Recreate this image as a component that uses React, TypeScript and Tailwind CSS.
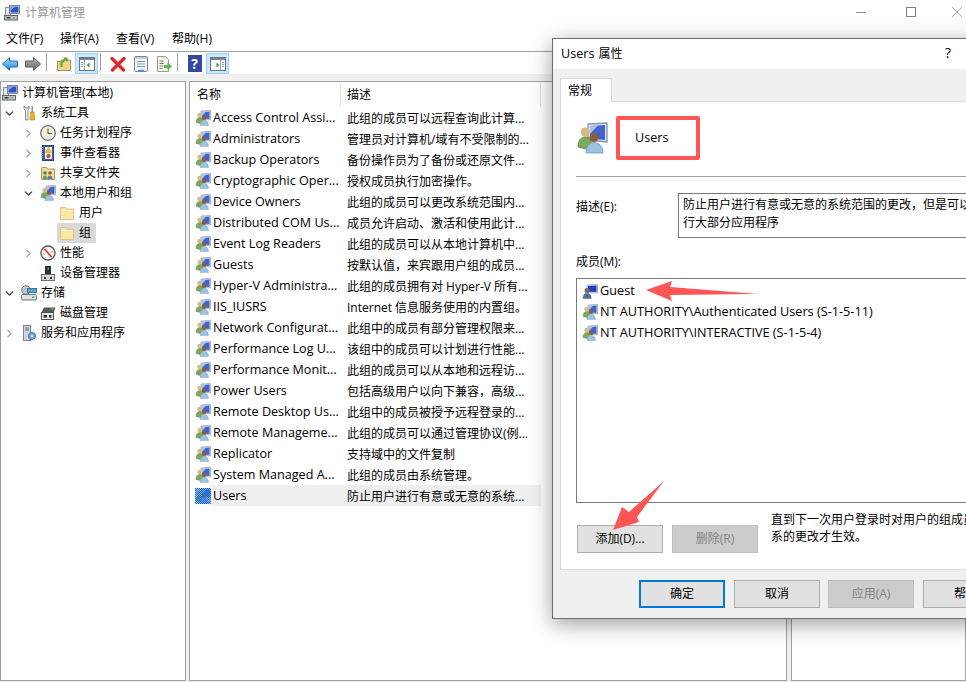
import type { ReactNode } from "react";
import { ChevronDown, ChevronRight } from "lucide-react";

const groups = [
  ["Access Control Assi...", "此组的成员可以远程查询此计算..."],
  ["Administrators", "管理员对计算机/域有不受限制的..."],
  ["Backup Operators", "备份操作员为了备份或还原文件..."],
  ["Cryptographic Oper...", "授权成员执行加密操作。"],
  ["Device Owners", "此组的成员可以更改系统范围内..."],
  ["Distributed COM Us...", "成员允许启动、激活和使用此计..."],
  ["Event Log Readers", "此组的成员可以从本地计算机中..."],
  ["Guests", "按默认值，来宾跟用户组的成员..."],
  ["Hyper-V Administra...", "此组的成员拥有对 Hyper-V 所有..."],
  ["IIS_IUSRS", "Internet 信息服务使用的内置组。"],
  ["Network Configurat...", "此组中的成员有部分管理权限来..."],
  ["Performance Log U...", "该组中的成员可以计划进行性能..."],
  ["Performance Monit...", "此组的成员可以从本地和远程访..."],
  ["Power Users", "包括高级用户以向下兼容，高级..."],
  ["Remote Desktop Us...", "此组中的成员被授予远程登录的..."],
  ["Remote Manageme...", "此组的成员可以通过管理协议(例..."],
  ["Replicator", "支持域中的文件复制"],
  ["System Managed A...", "此组的成员由系统管理。"],
  ["Users", "防止用户进行有意或无意的系统..."],
];

const depthPad = ["pl-0", "pl-[19px]", "pl-[38px]"];

function Computer({ className = "w-4 h-4" }: { className?: string }) {
  return (
    <svg viewBox="0 0 16 16" className={className}>
      <rect x="1.5" y="2.5" width="5" height="8" fill="#e3e5e8" stroke="#8b9097" />
      <rect x="5.5" y="0.5" width="10" height="8" fill="#dfe5ee" stroke="#7d8794" />
      <rect x="6.5" y="1.5" width="8" height="6" fill="#2b50c4" />
      <path d="M6.5 1.5h5l-5 4z" fill="#86a6ea" />
      <rect x="0.5" y="10.5" width="13" height="4.5" fill="#bfc3c8" stroke="#5f656b" />
      <rect x="2.5" y="12" width="4" height="1.5" fill="#3c4044" />
      <rect x="9" y="12" width="2" height="1.5" fill="#6fbf4a" />
    </svg>
  );
}

function GroupIcon({ className = "w-4 h-4", dither }: { className?: string; dither?: boolean }) {
  return (
    <svg viewBox="0 0 16 16" className={className}>
      <defs>
        <pattern id="dither" width="2" height="2" patternUnits="userSpaceOnUse">
          <rect width="1" height="1" fill="#1a66cc" />
          <rect x="1" y="1" width="1" height="1" fill="#1a66cc" />
        </pattern>
      </defs>
      <path d="M6 1l9.500-.5V10L6 9z" fill="#dfe5ee" stroke="#8d99a8" strokeWidth="0.7" />
      <path d="M7 2l7.500-.5V9L7 8.300z" fill="#3f63cf" />
      <path d="M7 2l4-.3L7 6z" fill="#a8c0f0" />
      <circle cx="4.6" cy="5" r="2.300" fill="#d3bd80" />
      <path d="M1 12.500c0-3.200 1.500-5 3.600-5s3.400 1.800 3.400 5l-3 1z" fill="#7ea85c" stroke="#5d8043" strokeWidth="0.4" />
      <circle cx="9" cy="7.800" r="2.300" fill="#8a5f3d" />
      <path d="M5 15.500c0-3.300 1.700-5.200 4-5.200s4.500 1.900 4.500 5.200z" fill="#9cc0de" stroke="#6f97ba" strokeWidth="0.4" />
      {dither && <rect width="16" height="16" fill="#3d8be0" opacity="0.45" />}
      {dither && <rect width="16" height="16" fill="url(#dither)" />}
    </svg>
  );
}

function GuestIcon() {
  return (
    <svg viewBox="0 0 16 16" className="w-4 h-4">
      <path d="M5 2l10.500-.5V10L5 9.500z" fill="#dfe5ee" stroke="#8d99a8" strokeWidth="0.7" />
      <path d="M6 3l8.500-.5V9L6 8.700z" fill="#1f3fc0" />
      <circle cx="5" cy="7.500" r="2.500" fill="#7a6a55" />
      <path d="M1 15.500c0-3.300 1.600-5.200 4-5.200s4.200 1.900 4.200 5.200z" fill="#4f7590" stroke="#33506a" strokeWidth="0.4" />
    </svg>
  );
}

function Folder() {
  return (
    <svg viewBox="0 0 16 16" className="w-4 h-4">
      <path d="M1.500 2.500h5l1 1.500h7v10.500h-13z" fill="#fbe6a6" stroke="#dcc687" />
      <path d="M2 5.500h12" stroke="#fff6d9" />
    </svg>
  );
}

function ToolBtn({ active, first, children }: { active?: boolean; first?: boolean; children: ReactNode }) {
  return (
    <div className={`w-[23px] h-[21px] flex items-center justify-center border ${active ? "bg-[#cce8ff] border-[#99d1ff]" : "border-transparent"} ${first ? "-ml-[2px]" : ""}`}>
      {children}
    </div>
  );
}

function PaneIcon({ left }: { left?: boolean }) {
  return (
    <svg viewBox="0 0 16 16" className="w-4 h-4">
      <rect x="0.5" y="1.5" width="15" height="13" fill="#fdfdfd" stroke="#6d7680" />
      <rect x="1" y="2" width="14" height="2" fill="#78838f" />
      <path d={left ? "M5.500 4v10" : "M10.500 4v10"} stroke="#9aa4ae" />
      <path d={left ? "M10.500 6.500v5L7.500 9z" : "M6.500 6.500v5l3-2.500z"} fill="#2f9e44" />
      <path d={left ? "M2 6.500h2M2 8.500h2M2 10.500h2" : "M12 6.500h2M12 8.500h2M12 10.500h2"} stroke="#9aa4ae" />
    </svg>
  );
}

function Divider() {
  return <div className="w-px h-[18px] bg-[#a0a0a0] ml-[2px] mr-[5px]" />;
}

function Toolbar() {
  return (
    <div className="h-[22px] bg-white flex items-start pt-px shrink-0">
      <ToolBtn first>
        <svg viewBox="0 0 16 14" className="w-4 h-[14px]">
          <defs>
            <linearGradient id="backArrow" x1="0" y1="0" x2="0" y2="1">
              <stop offset="0" stopColor="#a6dcfb" />
              <stop offset="1" stopColor="#1f86d8" />
            </linearGradient>
          </defs>
          <path d="M.5 7L7.500.7v3.300h8v6h-8v3.300z" fill="url(#backArrow)" stroke="#2272b5" />
        </svg>
      </ToolBtn>
      <ToolBtn>
        <svg viewBox="0 0 16 14" className="w-4 h-[14px]">
          <defs>
            <linearGradient id="nextArrow" x1="0" y1="0" x2="0" y2="1">
              <stop offset="0" stopColor="#b5b5b5" />
              <stop offset="1" stopColor="#6a6a6a" />
            </linearGradient>
          </defs>
          <path d="M15.500 7L8.500.7v3.300h-8v6h8v3.300z" fill="url(#nextArrow)" stroke="#5c5c5c" />
        </svg>
      </ToolBtn>
      <Divider />
      <ToolBtn>
        <svg viewBox="0 0 16 16" className="w-4 h-4">
          <path d="M1.500 5.500h3l1-1.500h9v10.500h-13z" fill="#f0d48c" stroke="#b0925a" />
          <path d="M5.500 11V6.500l4-3.500" fill="none" stroke="#58ad2e" strokeWidth="2.200" />
          <path d="M7 1.500h4.500V6z" fill="#58ad2e" />
        </svg>
      </ToolBtn>
      <ToolBtn active><PaneIcon left /></ToolBtn>
      <Divider />
      <ToolBtn>
        <svg viewBox="0 0 16 16" className="w-4 h-4">
          <path d="M2 2.500l11.500 11.500M14 2.500L2.500 14" stroke="#de2a2a" strokeWidth="3.400" strokeLinecap="round" />
        </svg>
      </ToolBtn>
      <ToolBtn>
        <svg viewBox="0 0 16 16" className="w-4 h-4">
          <rect x="1.5" y="0.5" width="13" height="15" rx="1" fill="#f4f6f8" stroke="#7b8590" />
          <rect x="2" y="1" width="12" height="2" fill="#c3ccd5" />
          <path d="M4 5.500h8M4 8h8M4 10.500h8" stroke="#8a97a5" />
          <path d="M5 14.500h6" stroke="#3d9be3" strokeWidth="1.500" />
        </svg>
      </ToolBtn>
      <ToolBtn>
        <svg viewBox="0 0 16 16" className="w-4 h-4">
          <path d="M1.500.5h8l3 3v12h-11z" fill="#fbf8ec" stroke="#9c9a8d" />
          <path d="M3.500 5h4M3.500 7.500h4M3.500 10h4M3.500 12.500h3" stroke="#777" />
          <path d="M8 9h3.500V6.500L16 10.500l-4.500 4V12H8z" fill="#55b84a" />
        </svg>
      </ToolBtn>
      <Divider />
      <ToolBtn>
        <div className="w-[14px] h-[17px] bg-[#33489f] text-white text-[14px] leading-[17px] text-center font-bold">?</div>
      </ToolBtn>
      <ToolBtn active><PaneIcon /></ToolBtn>
    </div>
  );
}

function TreeRow({ depth, open, closed, selected, icon, label }: { depth: number; open?: boolean; closed?: boolean; selected?: boolean; icon: ReactNode; label: string }) {
  return (
    <div className={`h-5 flex items-center ${depthPad[depth]}`}>
      <div className="w-4 flex justify-center shrink-0">
        {open && <ChevronDown className="w-[13px] h-[13px] text-[#404040]" strokeWidth={2.5} />}
        {closed && <ChevronRight className="w-[13px] h-[13px] text-[#a6a6a6]" strokeWidth={2.5} />}
      </div>
      <div className={`flex items-center h-5 ml-[2px] pl-[2px] pr-[5px] ${selected ? "bg-[#d9d9d9]" : ""}`}>
        <div className="w-4 h-4 mr-[4px] shrink-0">{icon}</div>
        <span className="whitespace-nowrap">{label}</span>
      </div>
    </div>
  );
}

function Tree() {
  return (
    <div className="w-[186px] border border-[#a0a0a0] bg-white shrink-0 pt-px">
      <div className="h-5 flex items-center pl-px">
        <Computer className="w-4 h-4 mr-[4px]" />
        <span>计算机管理(本地)</span>
      </div>
      <TreeRow depth={0} open label="系统工具" icon={
        <svg viewBox="0 0 16 16" className="w-4 h-4">
          <path d="M3 1v3l1.500 1.500V15H7V5.500L8 4V1L6.500 3h-2z" fill="#e8ecef" stroke="#6f7880" strokeWidth="0.8" />
          <rect x="10.5" y="1" width="1.5" height="6" fill="#8f98a0" />
          <path d="M9.500 7h3.500l.5 8h-4.500z" fill="#f0b41c" stroke="#a8780f" strokeWidth="0.6" />
        </svg>
      } />
      <TreeRow depth={1} closed label="任务计划程序" icon={
        <svg viewBox="0 0 16 16" className="w-4 h-4">
          <circle cx="8" cy="8" r="7.300" fill="#f4eed9" stroke="#6d747b" strokeWidth="1.300" />
          <path d="M8 3.500V8.500h4" stroke="#4a4f54" fill="none" />
        </svg>
      } />
      <TreeRow depth={1} closed label="事件查看器" icon={
        <svg viewBox="0 0 16 16" className="w-4 h-4">
          <rect x="2.5" y="0.5" width="11" height="15" fill="#3f5f9e" stroke="#2d4777" />
          <path d="M1.500 2v12" stroke="#c8ced6" strokeWidth="2" strokeDasharray="1 1" />
          <rect x="5" y="2" width="7" height="12" fill="#eef1f5" />
          <path d="M8.500 2.500l3 5h-6z" fill="#f5c518" stroke="#a8860e" strokeWidth="0.5" />
          <circle cx="8.500" cy="11" r="2.200" fill="#c9534f" />
        </svg>
      } />
      <TreeRow depth={1} closed label="共享文件夹" icon={
        <svg viewBox="0 0 16 16" className="w-4 h-4">
          <path d="M1.500 2.500h5l1 1.500h7v10.500h-13z" fill="#f3dc9c" stroke="#b89a55" />
          <circle cx="5" cy="8" r="1.800" fill="#3f8f55" />
          <path d="M2.500 14c0-2 1-3.500 2.500-3.500s2.500 1.500 2.500 3.500z" fill="#5aa469" />
          <circle cx="10" cy="8" r="1.800" fill="#8a5f3d" />
          <path d="M7.500 14c0-2 1-3.500 2.500-3.500s2.500 1.500 2.500 3.500z" fill="#4f7fb5" />
        </svg>
      } />
      <TreeRow depth={1} open label="本地用户和组" icon={<GroupIcon />} />
      <TreeRow depth={2} label="用户" icon={<Folder />} />
      <TreeRow depth={2} selected label="组" icon={<Folder />} />
      <TreeRow depth={1} closed label="性能" icon={
        <svg viewBox="0 0 16 16" className="w-4 h-4">
          <circle cx="8" cy="8" r="7" fill="#fbf8f0" stroke="#5c5c5c" strokeWidth="1.400" />
          <path d="M4.500 4l7 8" stroke="#d8312a" strokeWidth="1.600" />
          <circle cx="4" cy="9" r="0.7" fill="#777" />
          <circle cx="12" cy="7" r="0.7" fill="#777" />
        </svg>
      } />
      <TreeRow depth={1} label="设备管理器" icon={
        <svg viewBox="0 0 16 16" className="w-4 h-4">
          <rect x="5" y="1" width="6" height="9" fill="#2d2f31" />
          <rect x="7.5" y="3" width="1.500" height="1.500" fill="#4cd964" />
          <rect x="1.5" y="9.500" width="13" height="6" fill="#d4d7da" stroke="#6d7278" />
          <rect x="4" y="12" width="2" height="2" fill="#333" />
          <rect x="10" y="12" width="2" height="2" fill="#333" />
        </svg>
      } />
      <TreeRow depth={0} open label="存储" icon={
        <svg viewBox="0 0 16 16" className="w-4 h-4">
          <circle cx="5" cy="5" r="4.300" fill="#c4ccd3" stroke="#6f7880" />
          <circle cx="5" cy="5" r="1.200" fill="#f2f4f6" stroke="#6f7880" strokeWidth="0.5" />
          <rect x="6.5" y="3.500" width="9" height="4" fill="#5aa0d8" stroke="#3d7199" />
          <rect x="0.5" y="9.500" width="15" height="5.500" rx="1" fill="#dfe3e6" stroke="#6d7278" />
          <rect x="11" y="11.500" width="2.500" height="1.500" fill="#3fae49" />
        </svg>
      } />
      <TreeRow depth={1} label="磁盘管理" icon={
        <svg viewBox="0 0 16 16" className="w-4 h-4">
          <path d="M4 2.500h11.500l-2 5H1.500z" fill="#55585b" />
          <rect x="10.5" y="3.500" width="3" height="1" fill="#5fd06a" />
          <rect x="1.5" y="7.500" width="12" height="7" fill="#e2e4e6" stroke="#4f5255" />
          <rect x="3.5" y="10" width="3.500" height="2.500" fill="#2d2f31" />
          <rect x="9" y="10" width="2.500" height="2.500" fill="#2d2f31" />
        </svg>
      } />
      <TreeRow depth={0} closed label="服务和应用程序" icon={
        <svg viewBox="0 0 16 16" className="w-4 h-4">
          <rect x="2.5" y="0.5" width="7" height="15" fill="#d1d7dd" stroke="#7b8590" />
          <path d="M4 3h4M4 5h4" stroke="#4a6aa8" />
          <circle cx="11" cy="11" r="3.500" fill="#6ba6de" stroke="#3d7199" strokeDasharray="1.500 0.700" strokeWidth="1.300" />
          <circle cx="11" cy="11" r="1.200" fill="#eaf2fa" />
        </svg>
      } />
    </div>
  );
}

function GroupList() {
  return (
    <div className="w-[598px] ml-[3px] border border-[#a0a0a0] bg-white shrink-0 pt-px">
      <div className="flex h-[24px] w-[351px] border-r border-[#e5e5e5]">
        <div className="w-[151px] pl-[7px] border-r border-[#e5e5e5] flex items-center">名称</div>
        <div className="pl-[6px] flex items-center">描述</div>
      </div>
      {groups.map(([name, desc]) => {
        const selected = name === "Users";
        return (
          <div key={name} className="h-[21px] flex items-center pl-[5px] w-[351px]">
            <GroupIcon className="w-4 h-4 shrink-0" dither={selected} />
            <div className={`flex items-center h-[21px] flex-1 pt-[2px] ${selected ? "bg-[#efefef]" : ""}`}>
              <span className="w-[136px] whitespace-nowrap pl-[2px] text-[12.6px]">{name}</span>
              <span className="whitespace-nowrap">{desc}</span>
            </div>
          </div>
        );
      })}
    </div>
  );
}

function DlgButton({ children, disabled, primary, className = "" }: { children: ReactNode; disabled?: boolean; primary?: boolean; className?: string }) {
  return (
    <div className={`w-[86px] h-[28px] shrink-0 flex items-center justify-center ${primary ? "border-2 border-[#0078d7] bg-[#e1e1e1]" : disabled ? "border border-[#bfbfbf] bg-[#cccccc] text-[#838383]" : "border border-[#adadad] bg-[#e1e1e1]"} ${className}`}>
      {children}
    </div>
  );
}

function Dialog() {
  return (
    <div className="absolute left-[552px] top-[38px] w-[500px] h-[581px] bg-[#f0f0f0] border border-[#6e6e6e] shadow-[0_5px_20px_rgba(0,0,0,0.38)] flex flex-col">
      <div className="h-[30px] bg-white flex items-center pl-[8px] relative shrink-0 gap-1">
        <span className="text-[12.6px]">Users</span>
        <span>属性</span>
        <span className="absolute left-[392px] top-[7px] text-[14px] font-medium">?</span>
      </div>
      <div className="pl-[7px] pt-[9px] flex-1 flex flex-col">
        <div className="w-[52px] h-[24px] bg-white border border-[#d9d9d9] border-b-0 flex items-center pl-[7px] relative z-10 -mb-px">
          常规
        </div>
        <div className="w-[480px] h-[469px] bg-white border border-[#d9d9d9] pl-[15px] pt-[14px]">
          <div className="flex items-center h-[44px]">
            <GroupIcon className="w-8 h-8" />
            <div className="ml-[8px] w-[84px] h-[44px] border-[4px] border-[#fe5555] rounded-[2px] flex items-center pl-[15px] text-[12.6px]">Users</div>
          </div>
          <div className="w-[440px] h-px bg-[#a0a0a0] mt-[16px]" />
          <div className="flex mt-[16px]">
            <div className="w-[102px] shrink-0 pt-[8px]">描述(E):</div>
            <div className="w-[400px] shrink-0 h-[45px] border border-[#7a7a7a] pl-[4px] pt-[2px] leading-[18px] whitespace-nowrap">
              防止用户进行有意或无意的系统范围的更改，但是可以运<br />行大部分应用程序
            </div>
          </div>
          <div className="mt-[16px] h-[16px] leading-[16px]">成员(M):</div>
          <div className="w-[500px] h-[225px] border border-[#7a7a7a] mt-[8px] pt-px pl-[5px] text-[12.7px]">
            <div className="h-[21px] flex items-center gap-[2px]"><GuestIcon />Guest</div>
            <div className="h-[21px] flex items-center gap-[2px]"><GroupIcon />NT AUTHORITY\Authenticated Users (S-1-5-11)</div>
            <div className="h-[21px] flex items-center gap-[2px]"><GroupIcon />NT AUTHORITY\INTERACTIVE (S-1-5-4)</div>
          </div>
          <div className="flex items-start mt-[22px] ml-px">
            <DlgButton>添加(D)...</DlgButton>
            <DlgButton disabled className="ml-[9px]">删除(R)</DlgButton>
            <div className="ml-[13px] leading-[17px] -mt-[14px] whitespace-nowrap">
              直到下一次用户登录时对用户的组成员关<br />系的更改才生效。
            </div>
          </div>
        </div>
        <div className="flex mt-[10px] pl-[79px]">
          <DlgButton primary>确定</DlgButton>
          <DlgButton className="ml-[9px]">取消</DlgButton>
          <DlgButton disabled className="ml-[8px]">应用(A)</DlgButton>
          <DlgButton className="ml-[9px]">帮助</DlgButton>
        </div>
      </div>
    </div>
  );
}

export default function App() {
  return (
    <div className="w-[966px] h-[682px] relative overflow-hidden bg-[#f0f0f0] text-[12px] leading-none text-black flex flex-col font-['Open_Sans','Noto_Sans_CJK_SC',sans-serif]">
      <div className="h-[25px] bg-white flex items-center pl-[4px] relative shrink-0">
        <Computer className="w-4 h-4 mr-[5px]" />
        <span className="text-[#999]">计算机管理</span>
        <div className="absolute left-[856px] top-[12px] w-[10px] h-px bg-[#909090]" />
        <div className="absolute left-[906px] top-[7px] w-[10px] h-[10px] border border-[#808080]" />
        <svg viewBox="0 0 10 10" className="absolute left-[952px] top-[7px] w-[10px] h-[10px]">
          <path d="M0 0l10 10M10 0L0 10" stroke="#909090" strokeWidth="0.8" />
        </svg>
      </div>
      <div className="h-[27px] bg-white flex items-center pl-[6px] pt-[2px] shrink-0 border-b border-[#a0a0a0]">
        <span className="w-[54px]">文件(F)</span>
        <span className="w-[56px]">操作(A)</span>
        <span className="w-[56px]">查看(V)</span>
        <span>帮助(H)</span>
      </div>
      <Toolbar />
      <div className="flex-1 flex pt-[7px] pb-px min-h-0">
        <Tree />
        <GroupList />
        <div className="ml-[4px] flex-1 border border-[#a0a0a0] bg-white" />
      </div>
      <Dialog />
      {/* annotation arrows */}
      <svg viewBox="0 0 966 682" className="absolute inset-0 w-[966px] h-[682px] pointer-events-none">
        <path d="M646 290L672 281L670 287L758 294L670 295L672 301z" fill="#fe5555" />
        <path d="M613 530L622 507L629 512L664 481L637 517L639 522z" fill="#fe5555" />
      </svg>
    </div>
  );
}
